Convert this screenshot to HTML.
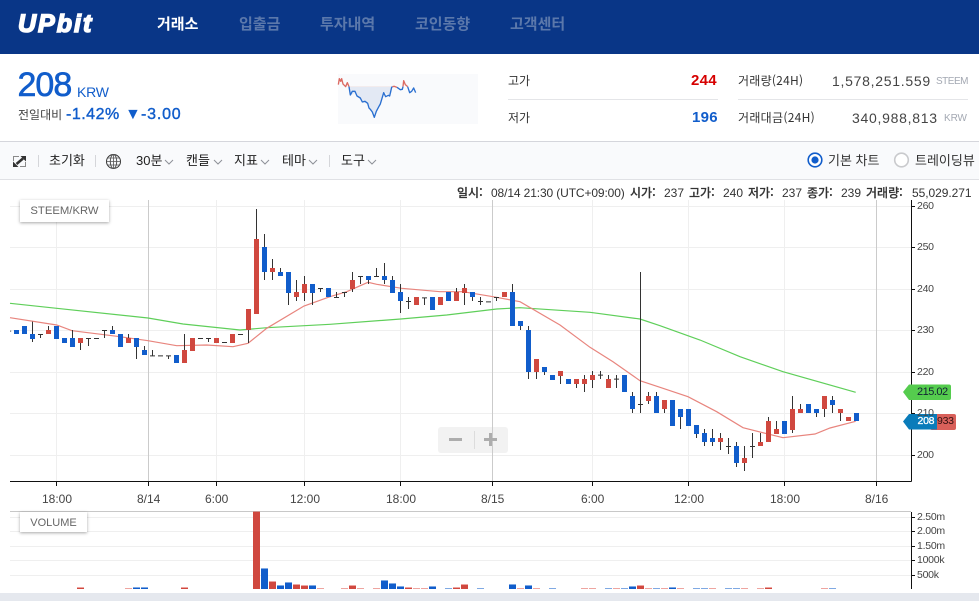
<!DOCTYPE html>
<html lang="ko"><head><meta charset="utf-8"><title>UPbit</title>
<style>
html,body{margin:0;padding:0;background:#fff}
body{width:979px;height:601px;overflow:hidden;position:relative;font-family:"Liberation Sans","Noto Sans CJK KR",sans-serif;color:#333}
.a{position:absolute;white-space:nowrap;line-height:1}
.k{font-family:"Noto Sans CJK KR","Liberation Sans",sans-serif}
#hd{position:absolute;left:0;top:0;width:979px;height:54px;background:#093687}
.nav{top:15px;font-size:15px;font-weight:700;color:#5b78ab;line-height:18px}
.lab{font-size:12px;color:#333;line-height:14px}
.tb{font-size:13px;color:#222;top:152px;line-height:16px}
.inf{top:186px;font-size:12px;line-height:14px;color:#333}
.inf b{font-weight:500;-webkit-text-stroke:.2px #333}
.y{left:917px;font-size:10.5px;letter-spacing:-.25px;line-height:12px;color:#444}
.t{top:493px;font-size:12px;line-height:13px;color:#444}
svg{position:absolute;left:0;top:0}
</style></head><body>
<div id="hd"></div>
<div class="a" style="left:18px;top:10px;font-size:25px;line-height:29px;font-weight:700;font-style:italic;color:#fff;letter-spacing:2px;-webkit-text-stroke:1.5px #fff">UPbit</div>
<div class="a k nav" style="left:157px;color:#fff">거래소</div>
<div class="a k nav" style="left:239px">입출금</div>
<div class="a k nav" style="left:320px">투자내역</div>
<div class="a k nav" style="left:415px">코인동향</div>
<div class="a k nav" style="left:510px">고객센터</div>

<div class="a" style="left:17.5px;top:68px;font-size:34px;line-height:34px;letter-spacing:-1px;color:#115dcb;-webkit-text-stroke:.6px #115dcb">208</div>
<div class="a" style="left:77px;top:84px;font-size:14px;line-height:16px;letter-spacing:-.2px;color:#115dcb">KRW</div>
<div class="a k" style="left:18px;top:107px;font-size:12px;line-height:15px;color:#444">전일대비</div>
<div class="a" style="left:66px;top:106px;font-size:16px;line-height:18px;color:#115dcb;-webkit-text-stroke:.4px #115dcb;letter-spacing:.5px">-1.42%</div>
<div class="a" style="left:125px;top:106px;font-size:16px;line-height:18px;color:#115dcb">▼</div>
<div class="a" style="left:141px;top:106px;font-size:16px;line-height:18px;color:#115dcb;-webkit-text-stroke:.4px #115dcb;letter-spacing:.8px">-3.00</div>

<div class="a" style="left:338px;top:74px;width:140px;height:50px;background:#f9fafc"></div>

<div class="a k lab" style="left:508px;top:74px">고가</div>
<div class="a" style="left:691px;top:73px;font-size:15px;line-height:16px;font-weight:700;color:#d60000;letter-spacing:.3px">244</div>
<div class="a" style="left:508px;top:99px;width:210px;height:1px;background:#e4e5e8"></div>
<div class="a k lab" style="left:508px;top:111px">저가</div>
<div class="a" style="left:692px;top:110px;font-size:15px;line-height:16px;font-weight:700;color:#115dcb;letter-spacing:.3px">196</div>
<div class="a k lab" style="left:738px;top:74px;letter-spacing:.25px">거래량(24H)</div>
<div class="a" style="left:832px;top:73px;font-size:14px;line-height:16px;color:#444;letter-spacing:.72px">1,578,251.559</div>
<div class="a" style="left:936px;top:76px;font-size:10px;line-height:12px;color:#a3a8b2;letter-spacing:-.5px">STEEM</div>
<div class="a" style="left:738px;top:99px;width:230px;height:1px;background:#e4e5e8"></div>
<div class="a k lab" style="left:738px;top:111px;letter-spacing:.3px">거래대금(24H)</div>
<div class="a" style="left:852px;top:110px;font-size:14px;line-height:16px;color:#444;letter-spacing:.72px">340,988,813</div>
<div class="a" style="left:944px;top:113px;font-size:10px;line-height:12px;color:#a3a8b2;letter-spacing:-.1px">KRW</div>

<div class="a" style="left:0;top:141px;width:979px;height:39px;box-sizing:border-box;background:#f9fafc;border-top:1px solid #d5d6dc;border-bottom:1px solid #e0e1e5"></div>
<div class="a k tb" style="left:49px">초기화</div>
<div class="a k tb" style="left:136px"><span style="font-family:'Liberation Sans'">30</span>분</div>
<div class="a k tb" style="left:186px">캔들</div>
<div class="a k tb" style="left:234px">지표</div>
<div class="a k tb" style="left:282px">테마</div>
<div class="a k tb" style="left:341px">도구</div>
<div class="a k tb" style="left:828px;color:#333">기본 차트</div>
<div class="a k tb" style="left:915px;color:#333">트레이딩뷰</div>

<svg width="979" height="601" viewBox="0 0 979 601">
<!-- mini chart -->
<g transform="translate(335,72) scale(.3333)" fill="none" stroke-width="4" stroke-linejoin="round">
<path d="M42 44H170V60L164 72L150 62L136 95L118 136L106 112L98 94L80 90L62 62L46 70Z" fill="#e3e9f4" stroke="none"/>
<path d="M42 44H170" stroke="#f0e4e4" stroke-width="2"/>
<path d="M10 38L13 20L17 28L20 20L24 36L28 40L32 44L37 32L42 44" stroke="#dc6a62"/>
<path d="M172 44L178 43L186 46" stroke="#dc6a62"/><path d="M204 44L206 26L211 38L218 44" stroke="#dc6a62"/>
<path d="M42 44L46 69L52 58L60 58L66 72L76 78L82 90L90 88L98 94L102 108L106 112L112 120L118 136L124 118L132 103L136 96L146 62L152 74L160 70L164 72L170 46L172 44M186 46L196 53L202 52L204 44M218 44L224 62L230 58L236 48L242 62" stroke="#2a6fd0"/>
</g>
<!-- toolbar icons -->
<g fill="none" stroke="#444">
<path d="M13.500 161V156.500H19M25.500 162V166.500H20" stroke="#8a8a8a"/>
<path d="M16.500 164L23 158.500" stroke="#333" stroke-width="2.600"/>
<path d="M26 156H20.500L26 161.500ZM13 167H18.500L13 161.500Z" fill="#333" stroke="none"/>
<path d="M38.500 155V167M95.500 155V167M329.500 155V167" stroke="#d5d6da"/>
<circle cx="113.500" cy="161.500" r="7" stroke="#333"/><ellipse cx="113.500" cy="161.500" rx="3.200" ry="7" stroke="#555"/>
<path d="M106.500 161.500H120.500M107.500 158H119.500M107.500 165H119.500M113.500 154.500V168.500" stroke="#555" stroke-width=".8"/>
<path d="M165 160L169 164L173 160M214 160L218 164L222 160M261 160L265 164L269 160M309 160L313 164L317 160M368 160L372 164L376 160" stroke="#8e9198"/>
</g>
<circle cx="815" cy="160" r="6.800" fill="#fff" stroke="#115dcb" stroke-width="1.600"/><circle cx="815" cy="160" r="3.600" fill="#115dcb"/>
<circle cx="901.500" cy="160" r="6.800" fill="#fff" stroke="#c9cacd" stroke-width="1.600"/>

<!-- grid -->
<g stroke="#efefef" fill="none">
<path d="M10 206.500H911M10 247.500H911M10 289.500H911M10 330.500H911M10 372.500H911M10 413.500H911M10 455.500H911"/>
<path d="M56.500 200V481M216.500 200V481M304.500 200V481M400.500 200V481M592.500 200V481M688.500 200V481M784.500 200V481"/>
<path d="M10 517.500H911M10 531.500H911M10 546.500H911M10 560.500H911M10 575.500H911"/>
</g>
<path d="M148.500 200V481M492.500 200V481M876.500 200V481" stroke="#cbcbcb" fill="none"/>

<!-- MA lines -->
<polyline fill="none" stroke="#5fcf5a" stroke-width="1.200" points="10,303.3 56.7,308.3 148,318 183,324 240,330 267,327.7 330,324.3 400.7,319 446.7,315 496.7,309 520,307.7 590,312.3 640,319 660,325.7 700,340 740,356.7 783,371.7 855.7,392.3"/>
<polyline fill="none" stroke="#e8857e" stroke-width="1.200" points="10,317.7 56.7,325 72,330.7 120,336.7 148,340.7 176.7,345.7 206.7,345 233,346.7 248,343.3 266.7,328.3 304,306 330,296.7 346.7,291.7 368,282.3 376.7,284.3 401.7,288.3 440,291.7 463,291.7 493,296.7 520,301.7 560,325 590,347.3 613,361.7 640,380.7 660,387.3 688,396.7 716.7,411.7 743,427.7 783,437.7 815,434 830,428 855.7,421.3"/>

<!-- candles part 1 -->
<g transform="translate(.17,200) scale(.33333)" fill="none">
<path stroke="#333" stroke-width="3" d="M97 365V426M121 402V414M145 378V390M217 390V414M241 429V450M265 414V438M313 390V414M337 378V390M385 402V414M409 441V477M433 438V450M457 450V466M505 466V477M553 402V450M625 414V426M745 390V429M769 27V117M793 102V240M817 177V240M841 204V216M865 279V315M889 240V303M913 228V303M937 279V315M961 264V276M113.500 403.500h15M257.500 415.500h15M281.500 415.500h15M305.500 391.500h15M449.500 467.500h15M473.500 467.500h15M497.500 467.500h15M593.500 415.500h15M617.500 415.500h15M665.500 427.500h15M713.500 403.500h15M953.500 265.500h15M30 393.500h3"/>
<path stroke="#115dcb" stroke-width="15" d="M49 390V402M73 378V402M97 402V417M169 378V417M193 414V429M217 414V441M337 390V402M361 402V441M409 414V441M433 450V465M529 465V489M793 141V216M841 216V228M865 216V279M937 252V279"/>
<path stroke="#d0483f" stroke-width="15" d="M145 390V402M241 414V429M385 414V429M553 450V489M577 414V453M649 414V429M697 402V429M745 327V390M769 117V342M817 204V216M889 276V291M913 252V279"/>
</g>
<!-- candles part 2 -->
<g transform="translate(330.17,250) scale(.33333)" fill="none">
<path stroke="#333" stroke-width="3" d="M19 126V144M11.500 142.500h15M43 126V141M35.500 127.500h15M67 66V126M91 78V102M83.500 79.500h15M115 90V102M139 54V80M131.500 79.500h15M163 39V102M187 78V90M211 102V189M235 141V177M227.500 154.500h15M283 142V165M275.500 143.500h15M379 114V126M403 102V165M427 141V153M451 141V165M443.500 154.500h15M467.500 155.500h15M499 141V153M491.500 142.500h15M547 102V126M571 228V240M595 228V387M619 366V387M643 366V375M691 378V402M739 402V414M763 375V426M787 363V414M811 363V387M803.500 375.500h15M835 375V387M859 375V414M851.500 387.500h15M907 426V489M931 66V489M923.500 463.500h15M955 426V462M979 426V489"/>
<path stroke="#115dcb" stroke-width="15" d="M-5 114V141M115 78V90M163 78V90M187 90V129M211 126V153M307 141V180M355 126V153M427 126V141M547 126V228M571 213V228M595 240V366M643 351V366M667 375V390M715 387V402M883 375V426M907 438V477M979 438V489"/>
<path stroke="#d0483f" stroke-width="15" d="M67 90V117M259 141V165M331 141V165M379 126V153M403 114V129M523 126V141M619 327V366M691 363V378M739 387V402M763 387V402M787 375V390M835 387V414M955 438V453"/>
</g>
<!-- candles part 3 -->
<g transform="translate(650.17,340) scale(.33333)" fill="none">
<path stroke="#333" stroke-width="3" d="M43 207V219M91 231V267M139 282V294M163 267V318M187 267V318M211 279V330M235 294V342M227.500 319.500h15M259 306V381M283 318V393M307 279V354M299.500 319.500h15M331 279V306M355 231V243M379 243V267M427 168V279M451 192V207M499 219V231M523 207V231M547 168V219M571 219V243"/>
<path stroke="#115dcb" stroke-width="15" d="M67 180V258M91 207V231M115 207V258M139 255V282M163 279V306M187 294V306M259 318V369M403 243V282M475 192V219M499 207V219M547 180V195M619 219V243"/>
<path stroke="#d0483f" stroke-width="15" d="M43 180V207M211 294V306M283 354V369M331 306V318M355 243V306M379 267V282M427 207V270M451 207V219M523 168V207M571 207V219M595 231V243"/>
</g>

<!-- axes -->
<g stroke="#111" fill="none">
<path d="M10 481.500H911.500M911.500 200V481.500"/>
<path d="M56.500 481V486M148.500 481V486M216.500 481V486M304.500 481V486M400.500 481V486M492.500 481V486M592.500 481V486M688.500 481V486M784.500 481V486M876.500 481V486"/>
<path d="M911 206.500h4M911 247.500h4M911 289.500h4M911 330.500h4M911 372.500h4M911 413.500h4M911 455.500h4"/>
<path d="M911.500 512V589M911 517.500h4M911 531.500h4M911 546.500h4M911 560.500h4M911 575.500h4"/>
</g>
<path d="M10 511.500H911" stroke="#c8c8c8"/>

<!-- volume -->
<g transform="translate(.17,480) scale(.33333)" fill="none" stroke-width="21">
<path stroke="#d0483f" d="M241 324V327M553 324V327M769 95V327M817 306V327M889 315V327M913 318V327M1057 318V327M1225 324V327M1369 324V327M1393 315V327"/>
<path stroke="#115dcb" d="M409 324V327M433 324V327M793 267V327M841 318V327M865 309V327M937 318V327M1153 303V327M1177 312V327M1201 321V327M1297 321V327"/>
<path stroke="#eea5a0" d="M241 321V324M385 324V327M553 321V324M817 303V306M889 312V315M913 315V318M961 324V327M1033 324V327M1057 315V318M1081 324V327M1129 324V327M1225 321V324M1249 324V327M1273 324V327M1369 321V324M1393 312V315"/>
<path stroke="#7fa9e3" d="M409 321V324M433 321V324M793 264V267M841 315V318M865 306V309M937 315V318M1153 300V303M1177 309V312M1201 318V321M1297 318V321M1345 324V327M1441 324V327"/>
</g>
<g transform="translate(490.17,480) scale(.33333)" fill="none" stroke-width="21">
<path stroke="#115dcb" d="M67 315V327M115 318V327M427 321V327M547 324V327"/>
<path stroke="#d0483f" d="M451 318V327M835 324V327"/>
<path stroke="#eea5a0" d="M91 324V327M139 324V327M283 324V327M307 324V327M379 324V327M451 315V318M475 324V327M523 324V327M571 324V327M667 324V327M763 324V327M811 324V327M835 321V324M1003 324V327"/>
<path stroke="#7fa9e3" d="M67 312V315M115 315V318M187 324V327M355 324V327M403 324V327M427 318V321M499 324V327M547 321V324M619 324V327M643 324V327M715 324V327M739 324V327M1027 324V327"/>
</g>

<!-- zoom control -->
<rect x="438" y="427" width="70" height="26" rx="3" fill="#f2f2f2"/>
<path d="M492.500 427V453" stroke="#cbcbcb"/>
<path d="M449 439.500H462M484 439.500H497" stroke="#adadad" stroke-width="3" fill="none"/>
<path d="M490.500 433V446" stroke="#adadad" stroke-width="3" fill="none"/>
<path d="M474.500 431V449" stroke="#dcdcdc"/>

<!-- price tags -->
<path d="M903 392L909 384.500H949a2 2 0 0 1 2 2V398a2 2 0 0 1 -2 2H909Z" fill="#55cc4e"/>
<rect x="930" y="414" width="26" height="16" rx="2" fill="#d9605a"/>
<path d="M903 421.500L909 414H937V429.500H909Z" fill="#0a7cba"/>
</svg>

<div class="a" style="left:20px;top:200px;width:89px;height:22px;background:#fff;box-shadow:0 1px 3px rgba(0,0,0,.35);font-size:11.3px;line-height:22px;text-align:center;color:#666">STEEM/KRW</div>
<div class="a" style="left:20px;top:512px;width:67px;height:20px;background:#fff;box-shadow:0 1px 3px rgba(0,0,0,.35);font-size:11px;line-height:22px;text-align:center;color:#666">VOLUME</div>

<div class="a inf" style="left:457px"><b class="k">일시:</b></div>
<div class="a inf" style="left:491px;letter-spacing:-.12px">08/14 21:30 (UTC+09:00)</div>
<div class="a inf" style="left:630px"><b class="k">시가:</b></div>
<div class="a inf" style="left:664px">237</div>
<div class="a inf" style="left:689px"><b class="k">고가:</b></div>
<div class="a inf" style="left:723px">240</div>
<div class="a inf" style="left:748px"><b class="k">저가:</b></div>
<div class="a inf" style="left:782px">237</div>
<div class="a inf" style="left:807px"><b class="k">종가:</b></div>
<div class="a inf" style="left:841px">239</div>
<div class="a inf" style="left:866px"><b class="k">거래량:</b></div>
<div class="a inf" style="left:912px;letter-spacing:-.05px">55,029.271</div>

<div class="a y" style="top:200px">260</div>
<div class="a y" style="top:241px">250</div>
<div class="a y" style="top:283px">240</div>
<div class="a y" style="top:324px">230</div>
<div class="a y" style="top:366px">220</div>
<div class="a y" style="top:407px">210</div>
<div class="a y" style="top:449px">200</div>
<div class="a" style="left:917px;top:386px;font-size:11px;letter-spacing:-.5px;line-height:13px;color:#123">215.02</div>
<div class="a" style="left:937px;top:415px;font-size:10.5px;letter-spacing:-.25px;line-height:13px;color:#311">933</div>
<div class="a" style="left:917.5px;top:415px;font-size:10.5px;letter-spacing:-.25px;line-height:13px;color:#fff;-webkit-text-stroke:.3px #fff">208</div>

<div class="a t" style="left:42px">18:00</div>
<div class="a t" style="left:137px">8/14</div>
<div class="a t" style="left:205px">6:00</div>
<div class="a t" style="left:290px">12:00</div>
<div class="a t" style="left:386px">18:00</div>
<div class="a t" style="left:481px">8/15</div>
<div class="a t" style="left:581px">6:00</div>
<div class="a t" style="left:674px">12:00</div>
<div class="a t" style="left:770px">18:00</div>
<div class="a t" style="left:865px">8/16</div>

<div class="a y" style="top:511px">2.50m</div>
<div class="a y" style="top:525px">2.00m</div>
<div class="a y" style="top:540px">1.50m</div>
<div class="a y" style="top:554px">1000k</div>
<div class="a y" style="top:569px">500k</div>

<div class="a" style="left:0;top:593px;width:979px;height:8px;background:#e5e8ee"></div>
</body></html>
